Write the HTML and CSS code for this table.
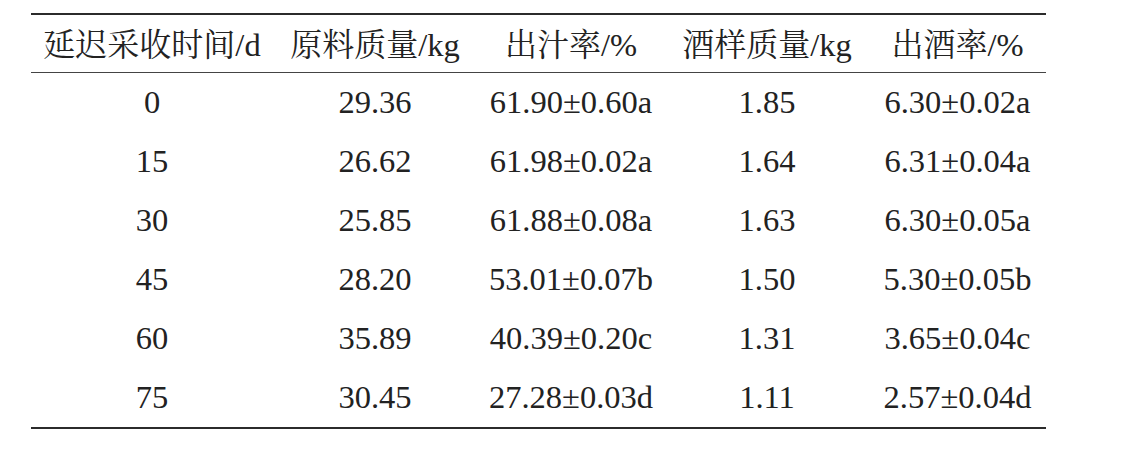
FILE: index.html
```
<!doctype html>
<html>

<head>
    <meta charset="utf-8">
    <title>延迟采收时间对出汁率与出酒率的影响</title>
    <link rel="stylesheet" href="styles.css">
</head>

<body>
    <table class="data-table">
        <colgroup>
            <col class="c1">
            <col class="c2">
            <col class="c3">
            <col class="c4">
            <col class="c5">
        </colgroup>
        <thead>
            <tr>
                <th><span class="zh">延迟采收时间</span>/d</th>
                <th><span class="zh">原料质量</span>/kg</th>
                <th><span class="zh">出汁率</span>/%</th>
                <th><span class="zh">酒样质量</span>/kg</th>
                <th><span class="zh">出酒率</span>/%</th>
            </tr>
        </thead>
        <tbody>
            <tr><td>0</td><td>29.36</td><td>61.90±0.60a</td><td>1.85</td><td>6.30±0.02a</td></tr>
            <tr><td>15</td><td>26.62</td><td>61.98±0.02a</td><td>1.64</td><td>6.31±0.04a</td></tr>
            <tr><td>30</td><td>25.85</td><td>61.88±0.08a</td><td>1.63</td><td>6.30±0.05a</td></tr>
            <tr><td>45</td><td>28.20</td><td>53.01±0.07b</td><td>1.50</td><td>5.30±0.05b</td></tr>
            <tr><td>60</td><td>35.89</td><td>40.39±0.20c</td><td>1.31</td><td>3.65±0.04c</td></tr>
            <tr><td>75</td><td>30.45</td><td>27.28±0.03d</td><td>1.11</td><td>2.57±0.04d</td></tr>
        </tbody>
    </table>
</body>

</html>
```

FILE: styles.css
```
body {
    margin: 0;
    background: #fff;
    color: #222;
}
.data-table {
    margin: 13px 0 0 31px;
    width: 1015px;
    border-collapse: collapse;
    table-layout: fixed;
    border-top: 2px solid #2b2b2b;
    border-bottom: 2px solid #2b2b2b;
    font-family: "Liberation Serif", "Noto Serif CJK SC", serif;
    font-size: 32.5px;
    color: #222;
}
.c1 { width: 242px; }
.c2 { width: 204px; }
.c3 { width: 188px; }
.c4 { width: 204px; }
.c5 { width: 177px; }
.data-table th,
.data-table td {
    padding: 0;
    text-align: center;
    white-space: nowrap;
    font-family: "Liberation Serif", "Noto Serif CJK SC", serif;
    font-weight: normal;
    line-height: 1;
}
.data-table thead th {
    height: 57px;
    border-bottom: 1px solid #444;
}
.data-table tbody td {
    height: 59px;
    vertical-align: middle;
}
.zh {
    font-family: "Noto Serif CJK SC", serif;
    font-weight: normal;
    font-size: 32px;
}
```
